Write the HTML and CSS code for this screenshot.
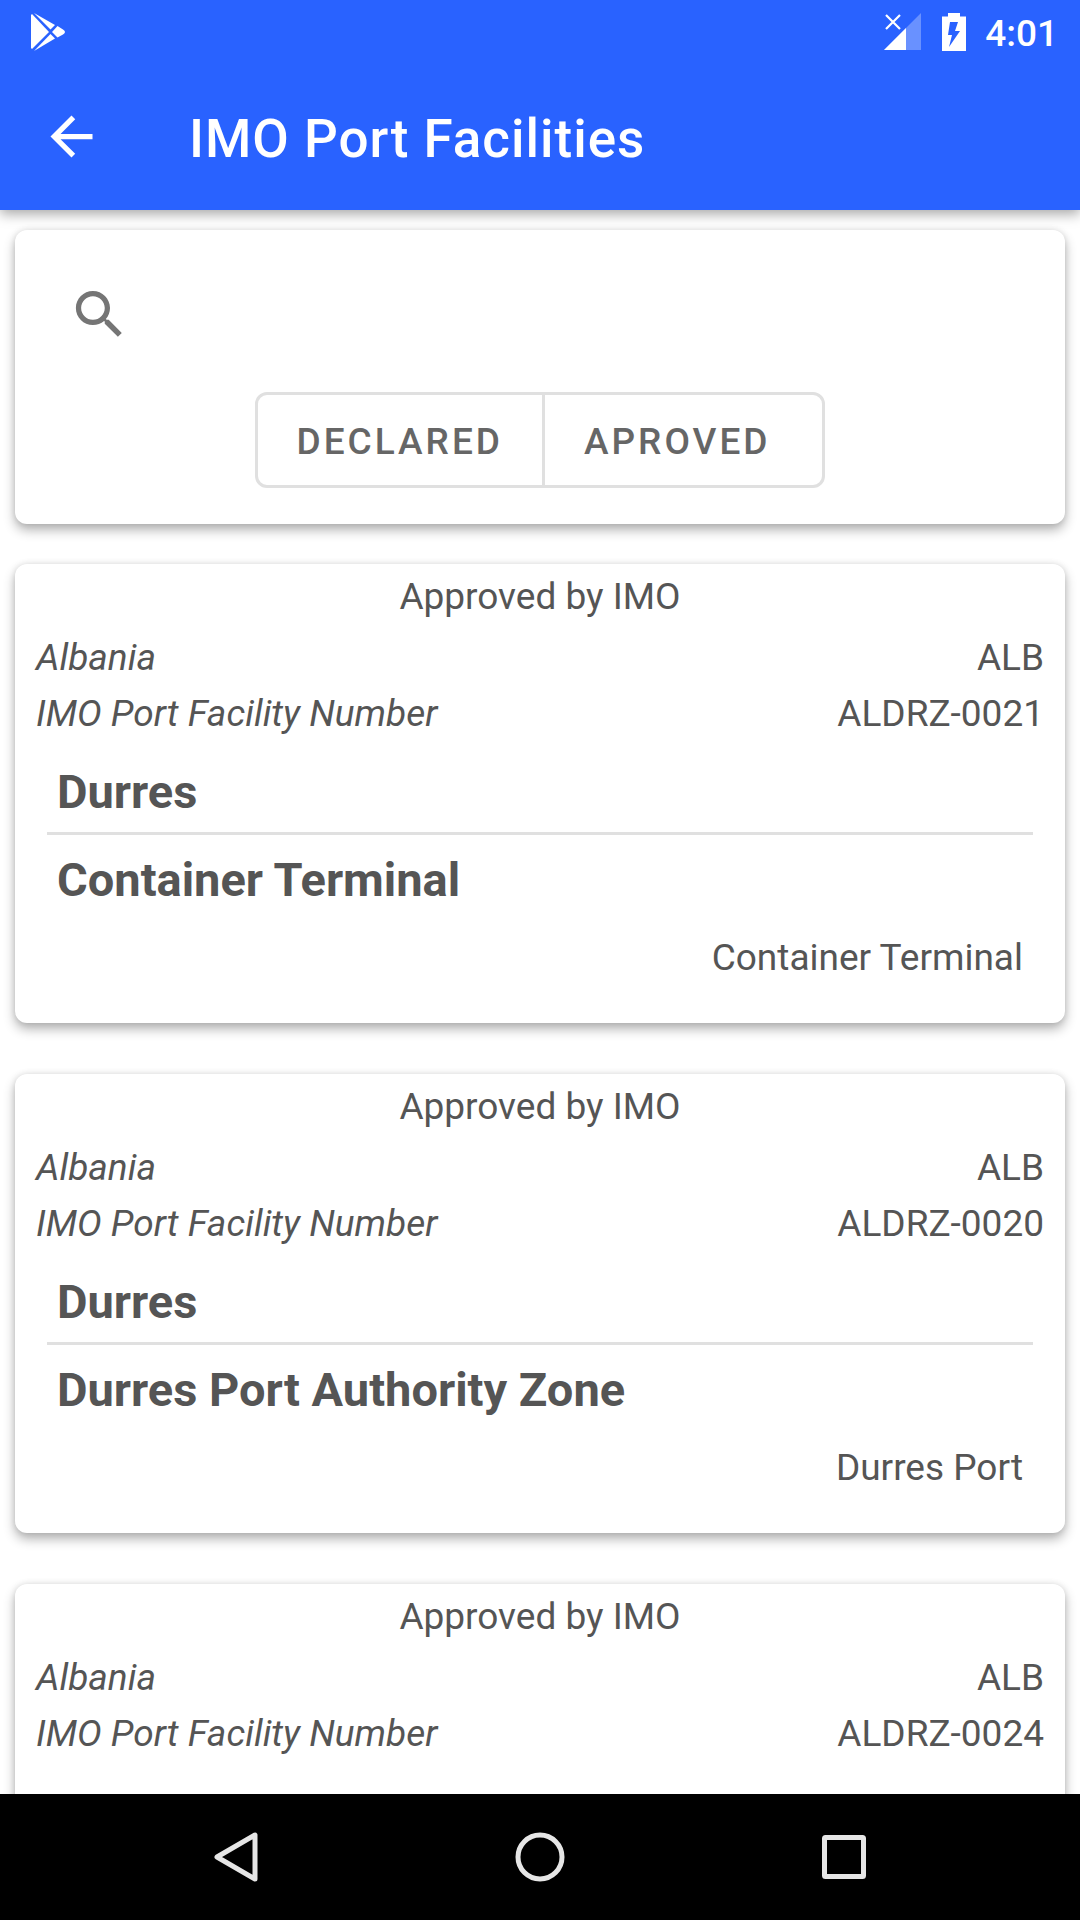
FILE: index.html
```html
<!DOCTYPE html>
<html lang="en">
<head>
    <meta charset="UTF-8">
    <meta name="viewport" content="width=device-width, initial-scale=1.0">
    <title>IMO Port Facilities</title>
    <link rel="stylesheet" href="styles.css">
</head>
<body>
    <header class="top">
        <div class="status-bar">
            <svg class="play-icon" viewBox="0 0 34 38" fill="#fff">
                <path d="M0 2 L0 35 L1 36 L18 19 L1 1 Z"/>
                <path d="M3 0 L24 12 L19.500 16.500 Z"/>
                <path d="M3 38 L24 25.500 L19.500 21 Z"/>
                <path d="M21 19 L26.500 13 L32 16.500 Q36 19 32 21.500 L26.500 24.500 Z"/>
            </svg>
            <div class="status-right">
                <svg class="signal-icon" viewBox="0 0 38 38">
                    <path d="M37 0 V37 H0 Z" fill="#fff" fill-opacity="0.300"/>
                    <path d="M22 15 V37 H0 Z" fill="#fff"/>
                    <path d="M2 2 L16 16 M16 2 L2 16" stroke="#fff" stroke-width="2.200"/>
                </svg>
                <svg class="battery-icon" viewBox="0 0 24 38">
                    <path d="M6 0 H18 V3.500 H24 V38 H0 V3.500 H6 Z" fill="#fff"/>
                    <path d="M8 9 H16 L13 18 H18 L7 34 L10 22 H6 Z" fill="#2962ff"/>
                </svg>
                <span class="clock">4:01</span>
            </div>
        </div>
        <div class="app-bar">
            <button type="button" class="back-btn" aria-label="Back">
                <svg viewBox="0 0 24 24" fill="#fff"><path d="M20 11H7.830l5.590-5.590L12 4l-8 8 8 8 1.410-1.410L7.830 13H20v-2z"/></svg>
            </button>
            <h1>IMO Port Facilities</h1>
        </div>
    </header>

    <main>
        <form class="card search-card">
            <div class="search-row">
                <label for="search" aria-label="Search">
                    <svg viewBox="0 0 24 24" fill="#757575"><path d="M15.500 14h-.790l-.280-.270C15.410 12.590 16 11.110 16 9.500 16 5.910 13.090 3 9.500 3S3 5.910 3 9.500 5.910 16 9.500 16c1.610 0 3.090-.590 4.230-1.570l.270.280v.790l5 4.990L20.490 19l-4.990-5zm-6 0C7.010 14 5 11.990 5 9.500S7.010 5 9.500 5 14 7.010 14 9.500 11.990 14 9.500 14z"/></svg>
                </label>
                <input type="search" id="search">
            </div>
            <div class="toggle-group">
                <button type="button">DECLARED</button>
                <button type="button">APROVED</button>
            </div>
        </form>

        <article class="card facility">
            <p class="source">Approved by IMO</p>
            <div class="row"><em>Albania</em><span>ALB</span></div>
            <div class="row"><em>IMO Port Facility Number</em><span>ALDRZ-0021</span></div>
            <div class="details">
                <h2 class="port">Durres</h2>
                <h2>Container Terminal</h2>
                <p class="description">Container Terminal</p>
            </div>
        </article>

        <article class="card facility">
            <p class="source">Approved by IMO</p>
            <div class="row"><em>Albania</em><span>ALB</span></div>
            <div class="row"><em>IMO Port Facility Number</em><span>ALDRZ-0020</span></div>
            <div class="details">
                <h2 class="port">Durres</h2>
                <h2>Durres Port Authority Zone</h2>
                <p class="description">Durres Port</p>
            </div>
        </article>

        <article class="card facility">
            <p class="source">Approved by IMO</p>
            <div class="row"><em>Albania</em><span>ALB</span></div>
            <div class="row"><em>IMO Port Facility Number</em><span>ALDRZ-0024</span></div>
        </article>
    </main>

    <nav class="nav-bar">
        <button type="button" aria-label="Back">
            <svg viewBox="0 0 50 50"><path d="M44 3 V47 L6 25 Z"/></svg>
        </button>
        <button type="button" aria-label="Home">
            <svg viewBox="0 0 50 50"><circle cx="25" cy="25" r="22"/></svg>
        </button>
        <button type="button" aria-label="Recent apps">
            <svg viewBox="0 0 50 50"><rect x="5.500" y="5.500" width="39" height="39" rx="1"/></svg>
        </button>
    </nav>
</body>
</html>
```

FILE: styles.css
```css
* {
    margin: 0;
    padding: 0;
    box-sizing: border-box;
    font-family: Roboto, sans-serif;
}

body {
    height: 100vh;
    display: flex;
    flex-direction: column;
    overflow: hidden;
    background: #fff;
    color: #555;
    font-size: 37px;
    line-height: 56px;
}

svg {
    display: block;
}

button {
    background: none;
    border: none;
    cursor: pointer;
}

/* Header */
.top {
    flex: none;
    background: #2962ff;
    color: #fff;
    box-shadow: 0 4px 12px rgba(0, 0, 0, 0.35);
}

.status-bar {
    height: 63px;
    padding: 0 22px 0 31px;
    display: flex;
    justify-content: space-between;
    align-items: center;
}

.status-right {
    display: flex;
    align-items: center;
}

.play-icon {
    width: 34px;
    height: 38px;
}

.signal-icon {
    width: 38px;
    height: 38px;
    margin-right: 20px;
}

.battery-icon {
    width: 24px;
    height: 38px;
    margin-right: 19px;
}

.clock {
    padding-top: 4px;
    font-weight: 500;
}

.app-bar {
    height: 147px;
    padding: 0 40px;
    display: flex;
    align-items: center;
}

.back-btn {
    margin-right: 86px;
}

.back-btn svg,
.search-row svg {
    width: 63px;
    height: 63px;
}

h1 {
    padding-top: 4px;
    font-size: 53px;
    font-weight: 500;
    letter-spacing: 1px;
}

/* Content */
main {
    flex: 1;
    min-height: 0;
    padding: 20px 15px 0;
    overflow-y: auto;
    scrollbar-width: none;
}

.card {
    background: #fff;
    border-radius: 12px;
    box-shadow: 0 6px 12px rgba(0, 0, 0, 0.3), 0 0 6px rgba(0, 0, 0, 0.1);
}

.search-card {
    padding: 21px 21px 36px;
    margin-bottom: 40px;
}

.search-row {
    height: 126px;
    margin-bottom: 15px;
    padding: 0 32px;
    display: flex;
    align-items: center;
}

.search-row input {
    flex: 1;
    min-width: 0;
    height: 84px;
    padding: 0 16px;
    border: none;
    outline: none;
    background: none;
    color: #555;
    font-size: 37px;
}

.toggle-group {
    display: flex;
    justify-content: center;
}

.toggle-group button {
    height: 96px;
    padding: 2px 39px 0;
    border: 3px solid #e0e0e0;
    color: #666;
    font-size: 37px;
    font-weight: 500;
    letter-spacing: 3px;
}

.toggle-group button:first-child {
    border-radius: 12px 0 0 12px;
}

.toggle-group button:last-child {
    margin-left: -3px;
    padding-right: 52px;
    border-radius: 0 12px 12px 0;
}

/* Facility cards */
.facility {
    min-height: 459px;
    margin-bottom: 51px;
    padding: 5px 21px 37px;
}

.source {
    margin-bottom: 5px;
    text-align: center;
}

.row {
    display: flex;
    justify-content: space-between;
}

.details {
    margin-top: 22px;
    padding: 0 11px;
}

h2 {
    padding: 0 10px;
    font-size: 47px;
    font-weight: 700;
}

.port {
    padding-bottom: 12px;
    margin-bottom: 17px;
    border-bottom: 3px solid #e0e0e0;
}

.description {
    margin-top: 22px;
    padding: 0 10px;
    text-align: right;
}

/* Bottom navigation */
.nav-bar {
    flex: none;
    height: 126px;
    display: flex;
    justify-content: center;
    background: #000;
}

.nav-bar button {
    flex: 0 1 304px;
    display: flex;
    justify-content: center;
    align-items: center;
}

.nav-bar svg {
    width: 50px;
    height: 50px;
    fill: none;
    stroke: #e6e6e6;
    stroke-width: 5;
    stroke-linejoin: round;
}
```
